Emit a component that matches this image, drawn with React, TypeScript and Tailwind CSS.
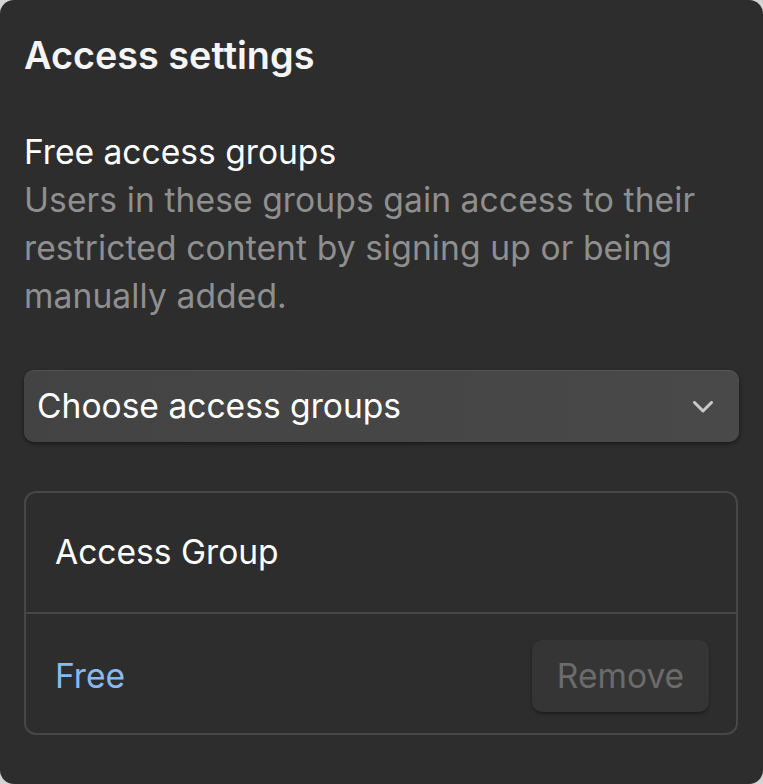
export default function App() {
  return (
    <div className="min-h-[784px] w-[763px] bg-[#d4d4d4]" style={{ fontFamily: 'Inter, "Noto Sans", sans-serif' }}>
      <div className="h-[784px] rounded-[14px] bg-[#2d2d2d] px-6 pt-[31px]">
        {/* Header */}
        <h1 className="text-[37.8px] font-semibold leading-[48px] text-[#f5f5f5]">Access settings</h1>

        {/* Free access groups */}
        <section className="mt-[49px] text-[33.6px] leading-[48px]">
          <h2 className="text-white">Free access groups</h2>
          <p className="tracking-[0.1px] text-[#8f8f8f]">
            Users in these groups gain access to their restricted content by signing up or being manually added.
          </p>
        </section>

        {/* Select */}
        <button className="mt-[50px] flex h-[72px] w-full items-center justify-between rounded-[10px] bg-gradient-to-r from-[#434343] to-[#494949] pl-[13px] pr-[26px] text-[33.6px] text-white shadow-[0_2px_4px_rgba(0,0,0,0.45),inset_0_1px_0_rgba(255,255,255,0.08)]">
          <span>Choose access groups</span>
          <svg width="20" height="12" viewBox="0 0 20 12" fill="none" className="mt-px">
            <polyline points="1.5,1.5 10,10 18.5,1.5" stroke="#c9c9c9" strokeWidth="3" strokeLinecap="round" strokeLinejoin="round" />
          </svg>
        </button>

        {/* Group card */}
        <div className="mt-[49px] w-[714px] rounded-[12px] border-2 border-[#474747]">
          <div className="flex h-[119px] items-center pl-[29px] text-[33.6px] text-white">Access Group</div>
          <div className="flex h-[121px] items-center justify-between border-t-2 border-[#474747] pb-[21px] pl-[29px] pr-[27px] pt-[26px]">
            <span className="text-[33.6px] text-[#8ab9f0]">Free</span>
            <button className="h-[72px] w-[177px] rounded-[10px] bg-[#353535] text-[33.6px] text-[#6b6b6b] shadow-[0_2px_3px_rgba(0,0,0,0.35)]">
              Remove
            </button>
          </div>
        </div>
      </div>
    </div>
  );
}
